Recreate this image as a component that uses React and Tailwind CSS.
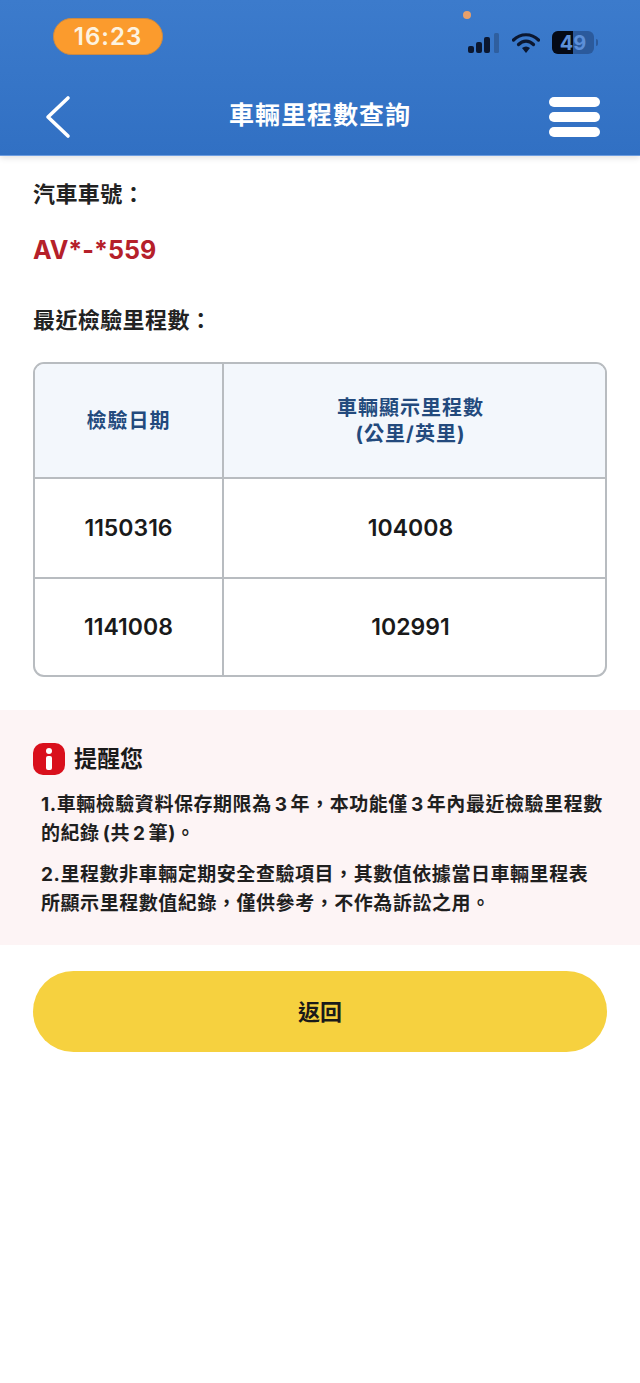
const font = { fontFamily: 'Inter, "Noto Sans CJK TC", "Liberation Sans", sans-serif' };

const rows = [
  ['1150316', '104008'],
  ['1141008', '102991'],
];

function StatusIcons() {
  return (
    <div className="flex items-center gap-[12px]">
      <svg width="33" height="22" viewBox="0 0 33 22">
        <rect x="1" y="14" width="6" height="7" rx="2" fill="#0b1730" />
        <rect x="9" y="10" width="6" height="11" rx="2" fill="#0b1730" />
        <rect x="17" y="5" width="6" height="16" rx="2" fill="#0b1730" />
        <rect x="27" y="1" width="5" height="20" rx="1.5" fill="#2f5f9f" />
      </svg>
      <svg width="28" height="22" viewBox="0 0 28 22" fill="none">
        <path d="M1.5 8 C8.5 1 19.500 1 26.5 8" stroke="#0b1730" strokeWidth="3.2" strokeLinecap="round" />
        <path d="M6.5 12.5 C11 8 17 8 21.5 12.5" stroke="#0b1730" strokeWidth="3.2" strokeLinecap="round" />
        <path d="M10 16 C12.500 14 15.500 14 18 16 L14 21 Z" fill="#0b1730" />
      </svg>
      <div className="flex items-center gap-[2px]">
        <div className="relative w-[42px] h-[23px] rounded-[6px] bg-[#2b5a9c] overflow-hidden">
          <div className="absolute inset-y-0 left-0 w-[21px] bg-[#050a16]" />
          <div className="absolute inset-0 flex items-center justify-center text-[20px] font-bold text-[#5c8fd8] leading-none">
            49
          </div>
        </div>
        <div className="w-[2px] h-[7px] rounded-r-sm bg-[#2b5a9c]" />
      </div>
    </div>
  );
}

function TopBar() {
  return (
    <header className="h-[156px] bg-gradient-to-b from-[#3c7bcc] to-[#3170c3] border-b border-[#6d9de0] shadow-[0_2px_6px_rgba(0,0,0,0.12)] relative">
      <div className="flex items-start justify-between pl-[53px] pr-[42px] pt-[18px] h-[78px]">
        <div className="w-[110px] h-[37px] rounded-full bg-[#fb9b2d] border border-[#c98a45] flex items-center justify-center text-[24px] font-semibold text-[#fdf3e0] leading-none tracking-[1px]">
          16:23
        </div>
        <div className="mt-[13px]">
          <StatusIcons />
        </div>
      </div>
      <div className="absolute left-[463px] top-[11px] w-[8px] h-[8px] rounded-full bg-[#e8a06a]" />
      <div className="grid grid-cols-[1fr_auto_1fr] items-center h-[78px] px-[40px]">
        <svg className="ml-[5px]" width="26" height="44" viewBox="0 0 26 44" fill="none">
          <path d="M23 3 L3 22 L23 41" stroke="#ffffff" strokeWidth="3.600" strokeLinecap="round" strokeLinejoin="round" />
        </svg>
        <h1 className="text-[25px] font-bold text-white leading-none tracking-[1px] pb-[3px]">車輛里程數查詢</h1>
        <div className="flex flex-col gap-[5px] w-[51px] justify-self-end">
          <div className="h-[10px] rounded-full bg-white" />
          <div className="h-[10px] rounded-full bg-white" />
          <div className="h-[10px] rounded-full bg-white" />
        </div>
      </div>
    </header>
  );
}

function MileageTable() {
  return (
    <div className="mx-[33px] mt-[26px] border-2 border-[#b8bcc0] rounded-[11px] overflow-hidden">
      <div className="grid grid-cols-[189px_1fr] h-[113px] bg-[#f3f7fc]">
        <div className="flex items-center justify-center border-r-2 border-[#b8bcc0] text-[20px] font-bold text-[#234a7d] tracking-[1px]">
          檢驗日期
        </div>
        <div className="flex flex-col items-center justify-center pr-[8px] pt-[1px] text-[20px] font-bold text-[#234a7d] tracking-[1px]">
          <div className="leading-[26px]">車輛顯示里程數</div>
          <div className="leading-[26px]">(公里/英里)</div>
        </div>
      </div>
      {rows.map(([date, km]) => (
        <div key={date} className="grid grid-cols-[189px_1fr] h-[100px] last:h-[98px] border-t-2 border-[#b8bcc0] text-[23px] font-semibold text-[#1a1a1a]">
          <div className="flex items-center justify-center border-r-2 border-[#b8bcc0] pt-[1px]">{date}</div>
          <div className="flex items-center justify-center pr-[8px] pt-[1px]">{km}</div>
        </div>
      ))}
    </div>
  );
}

function Notice() {
  return (
    <section className="mt-[33px] h-[235px] bg-[#fdf4f5] px-[33px] pt-[33px]">
      <div className="flex items-center gap-[9px]">
        <div className="w-[32px] h-[32px] rounded-[10px] bg-[#d9101c] flex flex-col items-center justify-center gap-[2px]">
          <div className="w-[6px] h-[6px] rounded-full bg-white" />
          <div className="w-[6px] h-[14px] rounded-[2px] bg-white" />
        </div>
        <span className="text-[23px] font-bold text-[#1a1a1a] leading-none">提醒您</span>
      </div>
      <div className="pl-[8px] pt-[15px] text-[19px] font-bold text-[#1f1f1f] leading-[29px] tracking-[0.55px] [word-spacing:-2px]">
        <p>1.車輛檢驗資料保存期限為 3 年，本功能僅 3 年內最近檢驗里程數的紀錄 (共 2 筆)。</p>
        <p className="mt-[12px]">2.里程數非車輛定期安全查驗項目，其數值依據當日車輛里程表所顯示里程數值紀錄，僅供參考，不作為訴訟之用。</p>
      </div>
    </section>
  );
}

export default function App() {
  return (
    <div className="w-[640px] h-[1383px] bg-white overflow-hidden" style={font}>
      <TopBar />
      <div className="px-[33px] pt-[22px]">
        <div className="text-[22px] font-bold text-[#222] leading-[32px] tracking-[0.4px]">汽車車號：</div>
        <div className="mt-[24px] text-[25px] font-bold text-[#b5202a] leading-[32px]">AV*-*559</div>
        <div className="mt-[38px] text-[22px] font-bold text-[#222] leading-[32px] tracking-[0.4px]">最近檢驗里程數：</div>
      </div>
      <MileageTable />
      <Notice />
      <div className="px-[33px] pt-[26px]">
        <button className="w-full h-[81px] rounded-full bg-[#f6d13f] pt-[2px] text-[22px] font-bold text-[#1a1a1a]">返回</button>
      </div>
    </div>
  );
}
